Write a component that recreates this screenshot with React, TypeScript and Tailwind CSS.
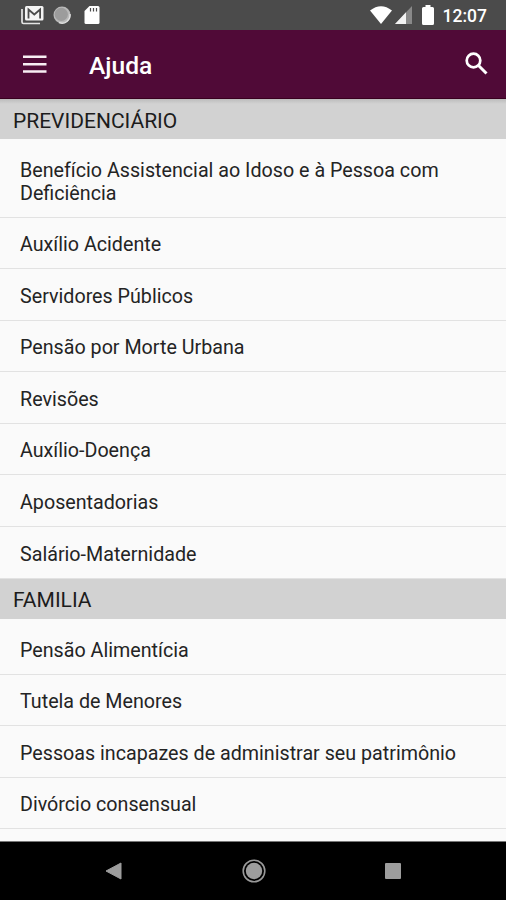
import React from 'react'

interface Section {
  title: string
  items: string[]
}

const sections: Section[] = [
  {
    title: 'PREVIDENCIÁRIO',
    items: [
      'Benefício Assistencial ao Idoso e à Pessoa com Deficiência',
      'Auxílio Acidente',
      'Servidores Públicos',
      'Pensão por Morte Urbana',
      'Revisões',
      'Auxílio-Doença',
      'Aposentadorias',
      'Salário-Maternidade',
    ],
  },
  {
    title: 'FAMILIA',
    items: [
      'Pensão Alimentícia',
      'Tutela de Menores',
      'Pessoas incapazes de administrar seu patrimônio',
      'Divórcio consensual',
    ],
  },
]

const StatusBar = () => (
  <div className="h-[30px] shrink-0 bg-[#4b4b4b] flex items-center justify-between pl-[21px] pr-[19px] text-white">
    <div className="flex items-center">
      {/* Mail */}
      <svg width="23" height="20" viewBox="0 0 23 20">
        <path d="M1 4v13q0 1.500 1.500 1.500H19" fill="none" stroke="#e4e4e4" strokeWidth="1.700" />
        <rect x="4" y="1" width="18.500" height="14.500" rx="1.500" fill="#f4f4f4" />
        <path d="M7.500 13.500V4.500l5.800 5 5.800-5v9" fill="none" stroke="#4b4b4b" strokeWidth="1.800" />
      </svg>
      {/* Sync */}
      <svg className="ml-[9px]" width="18" height="18" viewBox="0 0 18 18">
        <circle cx="9" cy="9" r="8.500" fill="#b9b9b9" />
        <circle cx="8.300" cy="8.300" r="6.600" fill="#9c9c9c" />
        <path d="M17 8a8 8 0 0 1-11 8.500" fill="none" stroke="#dedede" strokeWidth="1.400" />
      </svg>
      {/* SD card */}
      <svg className="ml-[13px]" width="16" height="20" viewBox="0 0 16 20">
        <path d="M5.500 1H14q1.500 0 1.500 1.500v15Q15.500 19 14 19H2Q.5 19 .5 17.500V6z" fill="#fff" />
        <path d="M6.500 3v3.500M9.500 3v3.500M12.500 3v3.500" stroke="#4b4b4b" strokeWidth="1.200" />
      </svg>
    </div>
    <div className="flex items-center">
      <svg width="22" height="18" viewBox="0 0 22 18">
        <path d="M0 4.500Q11-4 22 4.500L11 18z" fill="#fff" />
      </svg>
      <svg className="ml-[3px]" width="17" height="18" viewBox="0 0 17 18">
        <path d="M17 0v18H0z" fill="#898989" />
        <path d="M11 6.350V18H0z" fill="#f2f2f2" />
      </svg>
      <svg className="ml-[10px]" width="12" height="20" viewBox="0 0 12 20">
        <path d="M3.500 0h5v2H10.500Q12 2 12 3.500v15q0 1.500-1.500 1.500h-9Q0 20 0 18.500v-15Q0 2 1.500 2h2z" fill="#fff" />
      </svg>
      <span className="ml-[9px] pt-px text-[17.5px] leading-[20px] font-medium">12:07</span>
    </div>
  </div>
)

const AppBar = () => (
  <header className="h-[69px] shrink-0 bg-[#500a37] border-b border-[#39001f] flex items-center pl-[23px] pr-[18px] text-white">
    <button aria-label="Menu">
      <svg width="24" height="18" viewBox="0 0 24 18">
        <path d="M0 1.800h23.500M0 9.200h23.500M0 16.600h23.500" stroke="#f8eef3" strokeWidth="2.500" />
      </svg>
    </button>
    <h1 className="ml-[42px] mt-[4px] text-[24.6px] leading-[30px] font-medium">Ajuda</h1>
    <button aria-label="Buscar" className="ml-auto mb-px">
      <svg width="23" height="23" viewBox="0 0 23 23">
        <circle cx="8.500" cy="8.500" r="6.800" fill="none" stroke="#fff" strokeWidth="2.700" />
        <path d="M13.500 13.500l8 8" stroke="#fff" strokeWidth="3" />
      </svg>
    </button>
  </header>
)

const NavBar = () => (
  <nav className="h-[58px] shrink-0 bg-black flex items-center pl-[105px] pr-[105px] justify-between">
    <svg width="17" height="18" viewBox="0 0 17 18">
      <path d="M1 9L16 1v16z" fill="#9d9d9d" stroke="#9d9d9d" strokeLinejoin="round" />
    </svg>
    <svg width="24" height="24" viewBox="0 0 24 24">
      <circle cx="12" cy="12" r="10.800" fill="none" stroke="#999" strokeWidth="1.600" />
      <circle cx="12" cy="12" r="8.200" fill="#9d9d9d" />
    </svg>
    <div className="w-4 h-4 bg-[#9d9d9d] rounded-[1px]" />
  </nav>
)

export default function App() {
  return (
    <div className="w-[506px] h-[900px] flex flex-col overflow-hidden bg-[#fafafa] font-['Roboto',sans-serif]">
      <StatusBar />
      <AppBar />
      <main className="flex-1 min-h-0 overflow-hidden border-b border-[#777]">
        {sections.map((section) => (
          <section key={section.title} className="group">
            <h2 className="h-[40.4px] bg-[#d2d2d2] group-first:bg-[linear-gradient(#bcbcbc,#d2d2d2_5px)] pl-[13px] pt-[9.5px] text-[21px] leading-[24px] text-[#1c1c1c]">
              {section.title}
            </h2>
            <ul className="pt-1">
              {section.items.map((item) => (
                <li
                  key={item}
                  className="border-b border-[#e2e2e2] px-[20px] pt-[16.6px] pb-[11.4px] text-[19.7px] leading-[22.6px] text-[#242424]"
                >
                  {item}
                </li>
              ))}
            </ul>
          </section>
        ))}
      </main>
      <NavBar />
    </div>
  )
}
